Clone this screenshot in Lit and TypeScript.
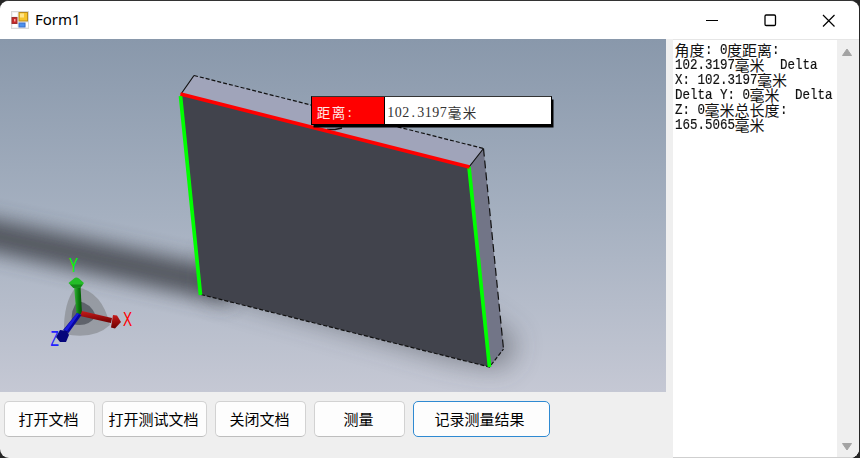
import { LitElement, html, svg, css } from "lit";
import { customElement, property } from "lit/decorators.js";

const lines = ["角度: 0度距离:", "102.3197毫米  Delta", "X: 102.3197毫米", "Delta Y: 0毫米  Delta", "Z: 0毫米总长度:", "165.5065毫米"];

@customElement("measure-log")
class MeasureLog extends LitElement {
  static styles = css`
    :host { display: flex; width: 186px; flex: none; background: #fff; border-top: 1px solid #e6e6e6; border-bottom: 1px solid #cfcfcf; box-sizing: border-box; }
    .text { flex: 1; padding: 2px 0 0 1.5px; }
    .line { display: flex; height: 15px; white-space: pre; color: #111; }
    .cjk { font: 15px/15px "Noto Sans CJK SC", sans-serif; }
    .latin { font: 15px/18px "Liberation Mono", monospace; transform: scaleX(0.8333); transform-origin: 0 0; -webkit-text-stroke: 0.2px #111; }
    .bar { width: 22px; background: #efefef; display: flex; flex-direction: column; justify-content: space-between; align-items: center; padding: 8px 3px 6px 0; box-sizing: border-box; }
    svg { display: block; }
  `;
  render() {
    return html`<div class="text">${lines.map((l) => html`<div class="line">${l.match(/[\x00-\x7f]+|[^\x00-\x7f]+/g)!.map((s) =>
      s.charCodeAt(0) < 128
        ? html`<span class="latin" style="width:${s.length * 7.5}px">${s}</span>`
        : html`<span class="cjk">${s}</span>`)}</div>`)}</div>
      <div class="bar">
        <svg width="12" height="9"><path d="M6 1 L10.5 7.5 H1.5 Z" fill="#a3a3a3" stroke="#a3a3a3" stroke-linejoin="round"/></svg>
        <svg width="12" height="9"><path d="M6 8 L10.5 1.5 H1.5 Z" fill="#a3a3a3" stroke="#a3a3a3" stroke-linejoin="round"/></svg>
      </div>`;
  }
}

@customElement("model-view")
class ModelView extends LitElement {
  static styles = css`
    :host { display: block; position: relative; width: 666px; height: 353px; overflow: hidden; }
    svg { display: block; }
    .axis { font: 17px "Liberation Sans", sans-serif; }
    .callout { position: absolute; left: 311px; top: 57px; width: 241px; height: 29px; box-sizing: border-box; border: 1px solid #000; border-top-color: #333; display: flex; background: #fff; box-shadow: 2px 3px 0 -0.5px #000; font: 13.5px/30px "Noto Sans CJK SC", sans-serif; }
    .name { width: 68px; background: #f00; color: #ffe8e8; border-right: 1px solid #000; padding-left: 4px; display: flex; }
    .value { padding-left: 2px; display: flex; color: #333; }
    .wide, .half { width: 15px; text-align: center; }
    .half { width: 7.5px; font: 14px/31px "Liberation Serif", serif; }
  `;
  cells(t: string) {
    return [...t].map((c) => html`<span class=${c.charCodeAt(0) < 128 ? "half" : "wide"}>${c}</span>`);
  }
  render() {
    return html`<svg width="666" height="353" viewBox="0 39 666 353">
      <defs>
        <linearGradient id="sky" x2="0" y2="1"><stop offset="0" stop-color="#8998ab"/><stop offset=".5" stop-color="#a5b0c0"/><stop offset="1" stop-color="#c5c8d4"/></linearGradient>
        <filter id="soft" filterUnits="userSpaceOnUse" x="-150" y="100" width="900" height="400"><feGaussianBlur stdDeviation="10"/></filter>
        <filter id="softer" filterUnits="userSpaceOnUse" x="-150" y="100" width="900" height="400"><feGaussianBlur stdDeviation="14"/></filter>
        <linearGradient id="green"><stop stop-color="#37b53b"/><stop offset=".6" stop-color="#0a7a0d"/><stop offset="1" stop-color="#045006"/></linearGradient>
        <linearGradient id="red" x2="0" y2="1"><stop stop-color="#c71b1b"/><stop offset="1" stop-color="#6d0000"/></linearGradient>
      </defs>
      <rect y="39" width="666" height="353" fill="url(#sky)"/>
      <path d="M-100 199 L230 270 V304 L-100 231 Z" fill="#3f4349" opacity=".84" filter="url(#soft)"/>
      <path d="M210 255 L480 315 L517 341 L504 368 L450 359 L210 290 Z" fill="#3f4349" opacity=".52" filter="url(#softer)"/>
      <path d="M181 94 L194 75.500 L483.500 148.500 L469 167 Z" fill="#a0a4ba"/>
      <path d="M469 167 L483.500 148.500 L503.500 349 L489.500 367 Z" fill="#727587"/>
      <path d="M181 94 L469 167 L489.500 367 L201 294.500 Z" fill="#41434c"/>
      <g fill="none" stroke="#111" stroke-width="1.200">
        <path d="M194 75.500 L483.500 148.500" stroke-dasharray="4 2"/>
        <path d="M181 94 L194 75.500 M469 167 L483.500 148.500"/>
        <path d="M483.500 148.500 L503.500 349" stroke-dasharray="8 4"/>
        <path d="M201 294.500 L489.500 367 L503.500 349" stroke-dasharray="4 2"/>
        <path d="M327 129.500 H335 L342 128" stroke-width="1.500"/>
      </g>
      <path d="M180.500 96 L200.500 295 M469 167 L489.500 367" stroke="#0f0" stroke-width="3.700"/>
      <path d="M180.500 94 L469.500 167" stroke="#f00" stroke-width="3.700"/>
      <g>
        <path d="M76 287 Q102 291 110 325 Q94 340 64 334 Q63 302 76 287 Z" fill="#85888e" fill-opacity=".65"/>
        <path d="M78 301 Q91 303 96 316 Q88 328 72 324 Q70 309 78 301 Z" fill="#555962" fill-opacity=".85"/>
        <path d="M74 286 H80.500 L82 314 H76.500 Z" fill="url(#green)"/>
        <path d="M68.500 283 L74 278.500 Q76 276.500 79 278.500 L84 283 L80.500 287.500 L73.500 288 Z" fill="#23bd27"/>
        <path d="M70 284.500 L73.500 288 L80.500 287.500 L83 284.500 Z" fill="#15881a"/>
        <path d="M82 311 L112 318 L111 323 L80 316 Z" fill="url(#red)"/>
        <path d="M113 315 L117 315.500 L121 322 L115 328.500 L111 327.500 Z" fill="url(#red)"/>
        <path d="M77 313 L81.500 315 L68.500 333 L63 330 Z" fill="#0808a0"/>
        <path d="M77 313 L79 314 L67 331 L64 330 Z" fill="#1d1ddd"/>
        <path d="M60 330 L67 331 L69 335 L66 342 H60 L56 337 Z" fill="#06067b"/>
      </g>
      <text class="axis" transform="translate(69 272) scale(.8 1.180)" fill="#0f0">Y</text>
      <text class="axis" transform="translate(123 326) scale(.8 1.180)" fill="#f00">X</text>
      <text class="axis" transform="translate(50.500 346) scale(.8 1.250)" fill="#22f">Z</text>
    </svg>
    <div class="callout"><div class="name">${this.cells("距离:")}</div><div class="value">${this.cells("102.3197毫米")}</div></div>`;
  }
}

@customElement("form-button")
class FormButton extends LitElement {
  @property() label = "";
  static styles = css`
    :host { display: block; box-sizing: border-box; height: 36px; border: 1px solid #d2d2d2; border-bottom-color: #bebebe; border-radius: 5px; background: #fdfdfd; color: #000; font: 15px/33px "Noto Sans CJK SC", sans-serif; text-align: center; white-space: nowrap; padding-right: 2px; }
    :host([focused]) { border: 1.5px solid #2f8ad2; padding-right: 4px; }
  `;
  render() { return html`${this.label}`; }
}

@customElement("app-root")
class AppRoot extends LitElement {
  static styles = css`
    :host { display: block; width: 860px; height: 458px; background: #262626; overflow: hidden; }
    .window { display: flex; flex-direction: column; height: 458px; width: 859px; box-sizing: border-box; border-top: 1px solid #333; border-radius: 9px; background: #efefef; overflow: hidden; }
    .title { height: 38px; flex: none; background: #fff; display: flex; align-items: center; padding-left: 11px; }
    .caption { font: 15px/20px "Noto Sans", sans-serif; margin-left: 6px; padding-bottom: 2px; flex: 1; color: #000; }
    .controls { display: flex; gap: 45px; padding-right: 24px; }
    .body { flex: 1; display: flex; justify-content: space-between; min-height: 0; }
    .buttons { display: grid; grid-template-columns: 91px 105px 91px 91px 137px; column-gap: 8px; padding: 9px 0 0 4px; }
    .buttons form-button:nth-child(n + 2) { margin-left: -1px; margin-right: 1px; }
    svg { display: block; }
  `;
  render() {
    return html`<div class="window">
      <div class="title">
        <svg width="18" height="18">${svg`
          <rect x=".5" y=".5" width="17" height="17" fill="#f2f2f2" stroke="#d8d8d8"/>
          <path d="M2 2 h4 v3 h-4 z M2 13 h4 v3 h-4 z M15 12 h2 v4 h-2 z" fill="#fff"/>
          <rect x="8" y="1.500" width="8.500" height="8.500" fill="#f6c42c" stroke="#b98b1b"/>
          <rect x="9" y="2.500" width="4" height="4" fill="#ffe58a"/>
          <rect x="1" y="6.500" width="5" height="6" fill="#c92828" stroke="#a03030"/>
          <rect x="3" y="8" width="1.500" height="2.500" fill="#f4a0a0"/>
          <rect x="8" y="12" width="6" height="4" fill="#4b91ee" stroke="#3b6fc9"/>`}
        </svg>
        <span class="caption">Form1</span>
        <div class="controls">
          <svg width="13" height="13"><path d="M0 6.500 H12" stroke="#000" stroke-width="1.200"/></svg>
          <svg width="13" height="13"><rect x="1" y="1" width="10.500" height="10.500" rx="1.200" fill="none" stroke="#000" stroke-width="1.300"/></svg>
          <svg width="13" height="13"><path d="M1 1 L12.5 12.5 M12.5 1 L1 12.5" stroke="#000" stroke-width="1.200"/></svg>
        </div>
      </div>
      <div class="body">
        <div>
          <model-view></model-view>
          <div class="buttons">
            <form-button label="打开文档"></form-button>
            <form-button label="打开测试文档"></form-button>
            <form-button label="关闭文档"></form-button>
            <form-button label="测量"></form-button>
            <form-button label="记录测量结果" focused></form-button>
          </div>
        </div>
        <measure-log></measure-log>
      </div>
    </div>`;
  }
}
